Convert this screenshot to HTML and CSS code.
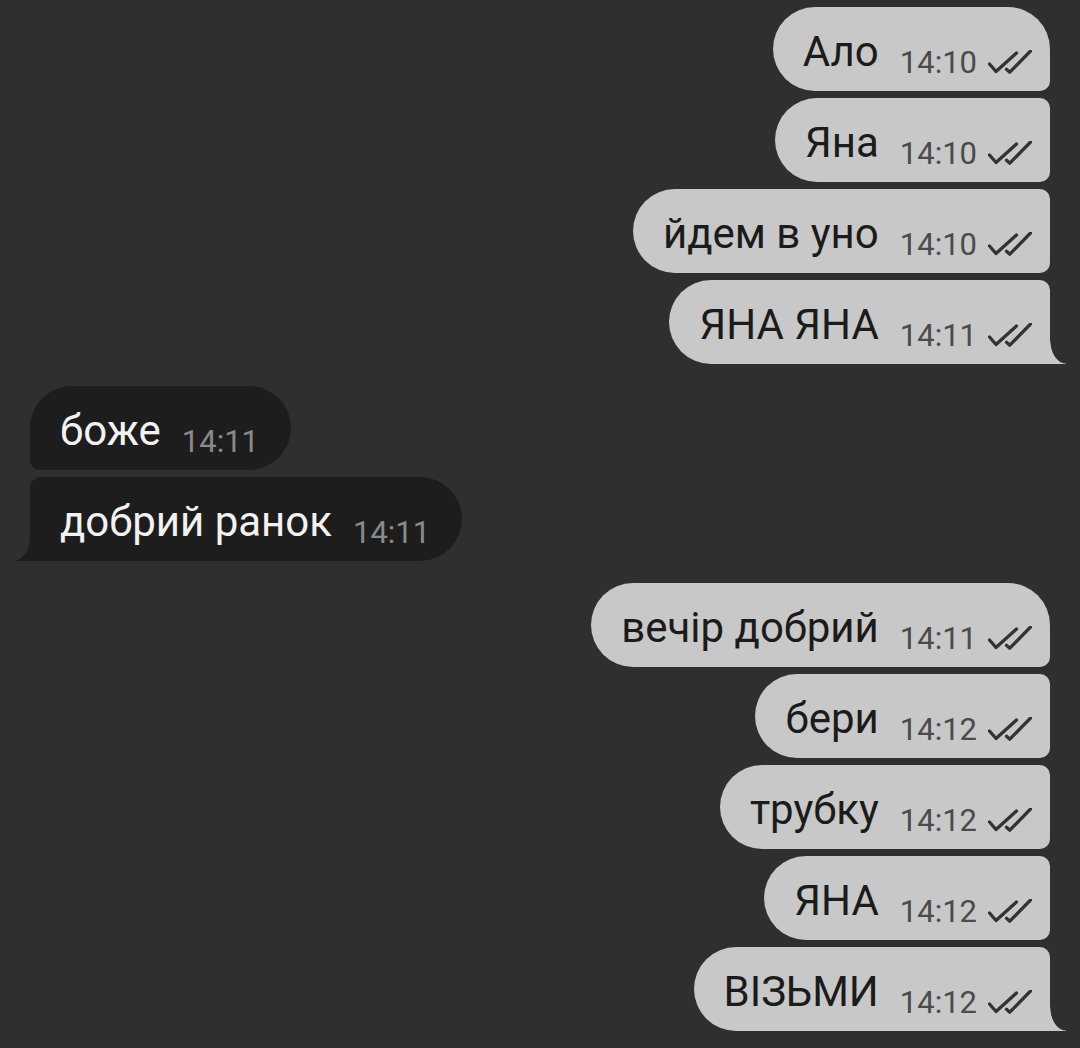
FILE: index.html
```html
<!DOCTYPE html>
<html lang="uk">
<head>
<meta charset="utf-8">
<title>Chat</title>
<link rel="stylesheet" href="styles.css">
</head>
<body>
<div class="chat">
  <div class="group out">
    <div class="msg first"><span class="text">Ало</span><span class="meta">14:10<svg class="ticks" viewBox="0 0 44 24" width="44" height="24"><path d="M1.5 14 L8 21.5 L28.5 3 M18.5 19.3 L21.8 22.2 L42.5 1" /></svg></span></div>
    <div class="msg"><span class="text">Яна</span><span class="meta">14:10<svg class="ticks" viewBox="0 0 44 24" width="44" height="24"><path d="M1.5 14 L8 21.5 L28.5 3 M18.5 19.3 L21.8 22.2 L42.5 1" /></svg></span></div>
    <div class="msg"><span class="text">йдем в уно</span><span class="meta">14:10<svg class="ticks" viewBox="0 0 44 24" width="44" height="24"><path d="M1.5 14 L8 21.5 L28.5 3 M18.5 19.3 L21.8 22.2 L42.5 1" /></svg></span></div>
    <div class="msg last"><span class="text">ЯНА ЯНА</span><span class="meta">14:11<svg class="ticks" viewBox="0 0 44 24" width="44" height="24"><path d="M1.5 14 L8 21.5 L28.5 3 M18.5 19.3 L21.8 22.2 L42.5 1" /></svg></span></div>
  </div>
  <div class="group in">
    <div class="msg first"><span class="text">боже</span><span class="meta">14:11</span></div>
    <div class="msg last"><span class="text">добрий ранок</span><span class="meta">14:11</span></div>
  </div>
  <div class="group out">
    <div class="msg first"><span class="text">вечір добрий</span><span class="meta">14:11<svg class="ticks" viewBox="0 0 44 24" width="44" height="24"><path d="M1.5 14 L8 21.5 L28.5 3 M18.5 19.3 L21.8 22.2 L42.5 1" /></svg></span></div>
    <div class="msg"><span class="text">бери</span><span class="meta">14:12<svg class="ticks" viewBox="0 0 44 24" width="44" height="24"><path d="M1.5 14 L8 21.5 L28.5 3 M18.5 19.3 L21.8 22.2 L42.5 1" /></svg></span></div>
    <div class="msg"><span class="text">трубку</span><span class="meta">14:12<svg class="ticks" viewBox="0 0 44 24" width="44" height="24"><path d="M1.5 14 L8 21.5 L28.5 3 M18.5 19.3 L21.8 22.2 L42.5 1" /></svg></span></div>
    <div class="msg"><span class="text">ЯНА</span><span class="meta">14:12<svg class="ticks" viewBox="0 0 44 24" width="44" height="24"><path d="M1.5 14 L8 21.5 L28.5 3 M18.5 19.3 L21.8 22.2 L42.5 1" /></svg></span></div>
    <div class="msg last"><span class="text">ВІЗЬМИ</span><span class="meta">14:12<svg class="ticks" viewBox="0 0 44 24" width="44" height="24"><path d="M1.5 14 L8 21.5 L28.5 3 M18.5 19.3 L21.8 22.2 L42.5 1" /></svg></span></div>
  </div>
</div>
</body>
</html>
```
FILE: styles.css
```css
html, body {
  margin: 0;
  padding: 0;
  background: #2f2f2f;
}
body {
  font-family: Roboto, "Noto Sans", "Liberation Sans", sans-serif;
  width: 1080px;
  height: 1048px;
  overflow: hidden;
}
.chat {
  display: flex;
  flex-direction: column;
  gap: 22px;
  padding-top: 7px;
}
.group {
  display: flex;
  flex-direction: column;
  gap: 7px;
}
.group.out {
  align-items: flex-end;
  padding-right: 30px;
}
.group.in {
  align-items: flex-start;
  padding-left: 30px;
}
.msg {
  position: relative;
  box-sizing: border-box;
  height: 84px;
  padding: 21px 18px 15px 30px;
  font-size: 42px;
  line-height: 48px;
  white-space: nowrap;
}
.out .msg {
  background: #c8c8c8;
  color: #1b1b1b;
  border-radius: 42px 10px 10px 42px;
}
.out .msg.first {
  border-radius: 42px 42px 10px 42px;
}
.out .msg.last {
  border-radius: 42px 10px 0 42px;
}
.out .msg.last::after {
  content: "";
  position: absolute;
  right: -16px;
  bottom: 0;
  width: 16px;
  height: 24px;
  background: radial-gradient(ellipse 16px 24px at 100% 0, transparent 96%, #c8c8c8 100%);
}
.in .msg {
  background: #1d1d1d;
  color: #f2f2f2;
  padding-right: 32px;
  border-radius: 10px 42px 42px 10px;
}
.in .msg.first {
  border-radius: 42px 42px 42px 10px;
}
.in .msg.last {
  border-radius: 10px 42px 42px 0;
}
.in .msg.last::after {
  content: "";
  position: absolute;
  left: -16px;
  bottom: 0;
  width: 16px;
  height: 24px;
  background: radial-gradient(ellipse 16px 24px at 0 0, transparent 96%, #1d1d1d 100%);
}
.meta {
  font-size: 31px;
  line-height: 20px;
  vertical-align: -7px;
  margin-left: 21px;
}
.out .meta {
  color: #4b4b4b;
}
.in .meta {
  color: #8a8a8a;
}
.ticks {
  display: inline-block;
  margin-left: 11px;
  vertical-align: -1px;
  fill: none;
  stroke: #333333;
  stroke-width: 3.3;
  stroke-linecap: round;
  stroke-linejoin: round;
}
```
